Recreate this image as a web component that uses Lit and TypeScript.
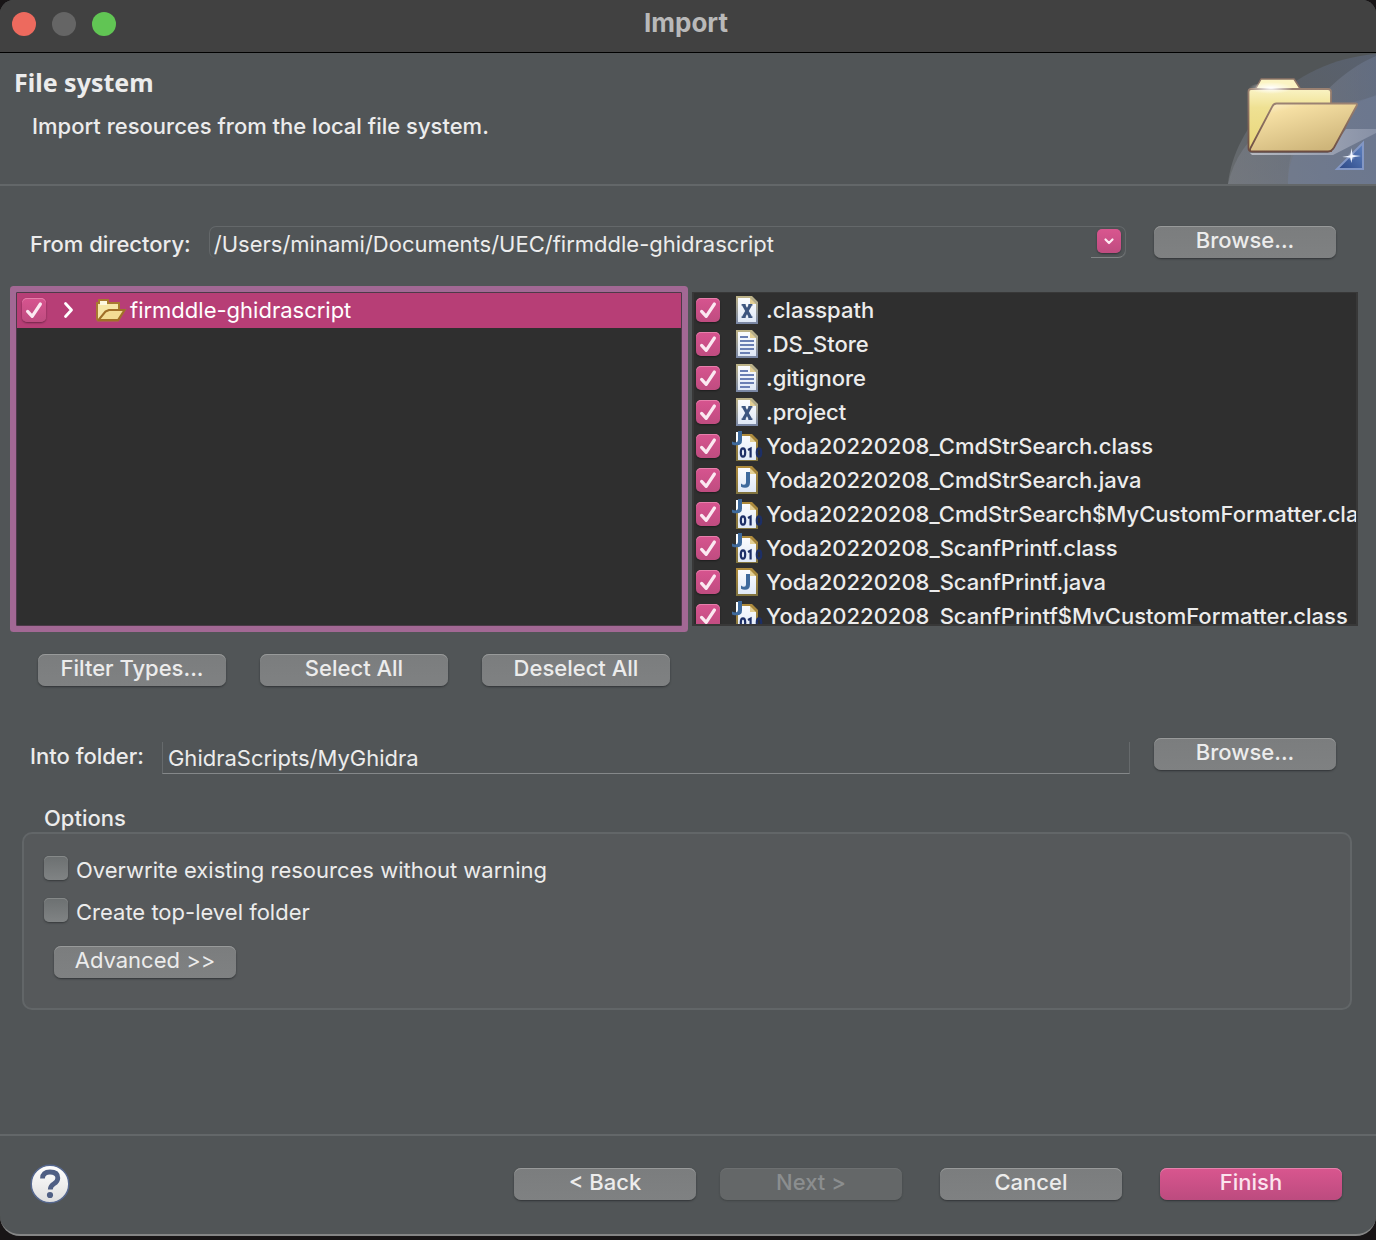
import { LitElement, html, css, svg } from "lit";
import { customElement, property } from "lit/decorators.js";

type FileKind = "xml" | "text" | "java" | "class";

interface Entry {
  name: string;
  kind: FileKind;
}

const FILES: Entry[] = [
  { name: ".classpath", kind: "xml" },
  { name: ".DS_Store", kind: "text" },
  { name: ".gitignore", kind: "text" },
  { name: ".project", kind: "xml" },
  { name: "Yoda20220208_CmdStrSearch.class", kind: "class" },
  { name: "Yoda20220208_CmdStrSearch.java", kind: "java" },
  { name: "Yoda20220208_CmdStrSearch$MyCustomFormatter.class", kind: "class" },
  { name: "Yoda20220208_ScanfPrintf.class", kind: "class" },
  { name: "Yoda20220208_ScanfPrintf.java", kind: "java" },
  { name: "Yoda20220208_ScanfPrintf$MyCustomFormatter.class", kind: "class" },
];

/* Tick box with an optional label and optional content between the two. */
@customElement("tick-box")
export class TickBox extends LitElement {
  @property() label = "";
  @property({ type: Boolean }) checked = false;
  @property({ type: Boolean }) low = false;

  static styles = css`
    :host {
      display: flex;
      min-width: 0;
    }
    .row {
      display: flex;
      align-items: center;
      white-space: nowrap;
    }
    .box {
      display: grid;
      flex: none;
      width: 24px;
      height: 24px;
    }
    .low .box {
      margin-right: 8px;
      margin-bottom: 4px;
    }
    input,
    .mark {
      grid-area: 1 / 1;
      width: 24px;
      height: 24px;
      margin: 0;
    }
    input {
      appearance: none;
      border-radius: 5px;
      background: linear-gradient(#6c7071, #808384);
      box-shadow:
        inset 0 1px 0 #868989,
        0 1px 2px #35383a;
    }
    input:checked {
      background: linear-gradient(#d7548f, #bf4c80);
      box-shadow:
        inset 0 1px 0 #e67fab,
        0 1px 2px #00000066;
    }
    .mark {
      pointer-events: none;
      visibility: hidden;
    }
    input:checked + .mark {
      visibility: visible;
    }
  `;

  render() {
    return html`<label class="row ${this.low ? "low" : ""}">
      <span class="box">
        <input type="checkbox" .checked=${this.checked} />
        <svg class="mark" viewBox="0 0 24 24" aria-hidden="true">
          <path d="M5.6 13.4 10.2 18.4 18.4 6" fill="none" stroke="#fbe9f1" stroke-width="3.2"
            stroke-linecap="round" stroke-linejoin="round" />
        </svg>
      </span>
      <slot></slot>
      <span>${this.label}</span>
    </label>`;
  }
}

/* Small document icons used in the file list. */
@customElement("file-icon")
export class FileIcon extends LitElement {
  @property() kind: FileKind = "text";

  static styles = css`
    :host {
      display: block;
      flex: none;
      width: 32px;
      height: 30px;
    }
    svg {
      display: block;
    }
  `;

  private sheet(edge: string, edgeLow: string, shift: number) {
    return svg`
      <defs>
        <linearGradient id="e" x1="0" y1="0" x2="0" y2="1">
          <stop offset="0" stop-color=${edge} /><stop offset="1" stop-color=${edgeLow} />
        </linearGradient>
        <linearGradient id="p" x1="0" y1="0" x2="0" y2="1">
          <stop offset="0" stop-color="#fbfcfe" /><stop offset="1" stop-color="#dfe8f6" />
        </linearGradient>
      </defs>
      <g transform="translate(0 ${shift})">
        <path d="M4 1H20L26 7V29H4Z" fill="url(#e)" />
        <path d="M6 3H18V9H24V27H6Z" fill="url(#p)" />
        <path d="M18 3L24 9H18Z" fill="#e3cf94" />
      </g>`;
  }

  private mark() {
    switch (this.kind) {
      case "xml":
        return svg`${this.sheet("#bfb487", "#7886a6", 0)}
          <g fill="none" stroke="#3c557f">
            <path d="M11.6 10 18.4 22M18.4 10 11.6 22" stroke-width="3.2" />
            <path d="M9.6 9.8H13.6M16.4 9.8H20.4M9.6 22.2H13.6M16.4 22.2H20.4" stroke-width="1.8" />
          </g>`;
      case "text":
        return svg`${this.sheet("#bfb487", "#7886a6", 0)}
          <path d="M8 8H16M8 12H22M8 16H22M8 20H22M8 24H18" stroke="#6a7fb4" stroke-width="1.8" />`;
      case "java":
        return svg`${this.sheet("#b08c3c", "#80733f", 0)}
          <path d="M14 7H18V17.5Q18 22.8 13 22.8 10.6 22.8 9 21.8V18.6Q10.6 19.8 12 19.8 14 19.8 14 17.5Z"
            fill="#3f6a9c" />`;
      default:
        return svg`${this.sheet("#b08c3c", "#80733f", 2)}
          <path d="M4 1H6V13H4Z" fill="#ffffff" />
          <path d="M6 0H10V9.5Q10 14.3 5 14.3 2 14.3 0 13.4V10.4Q2 11.4 3.6 11.4 6 11.4 6 9Z" fill="#3f6a9c" />
          <g fill="none" stroke="#1d2f66" stroke-width="2.2">
            <ellipse cx="11" cy="21.5" rx="2.2" ry="4.2" />
            <path d="M16 19 18.6 17.6V26.6" />
            <ellipse cx="27" cy="21.5" rx="2.2" ry="4.2" />
          </g>`;
    }
  }

  render() {
    return html`<svg width="32" height="30" viewBox="0 0 32 30" aria-hidden="true">${this.mark()}</svg>`;
  }
}

@customElement("app-root")
export class AppRoot extends LitElement {
  static styles = css`
    :host {
      display: flex;
      flex-direction: column;
      box-sizing: border-box;
      min-height: 100vh;
      padding-bottom: 4px;
      background: #181516;
      color: #ececec;
      font: 500 22px/28px Inter, "Liberation Sans", sans-serif;
    }
    * {
      box-sizing: border-box;
    }
    .window {
      flex: 1;
      display: flex;
      flex-direction: column;
      overflow: hidden;
      border-radius: 14px 14px 20px 20px;
      border-bottom: 2px solid #858686;
      background: #515557;
    }
    .titlebar {
      display: grid;
      grid-template-columns: 1fr auto 1fr;
      align-items: center;
      height: 53px;
      padding: 0 12px 4px;
      border-bottom: 1px solid #000;
      background: #414141;
    }
    .lights {
      display: flex;
      gap: 16px;
    }
    .light {
      width: 24px;
      height: 24px;
      padding: 0;
      border: 0;
      border-radius: 50%;
      background: #656565;
    }
    .close {
      background: #ed6a5e;
    }
    .zoom {
      background: #61c554;
    }
    h1,
    h2,
    p {
      margin: 0;
      font-size: inherit;
    }
    h1 {
      margin-right: 4px;
      padding-bottom: 2px;
      color: #b9b9b9;
      font-size: 26px;
      font-weight: 700;
      line-height: 32px;
    }
    .header {
      display: flex;
      justify-content: space-between;
      height: 133px;
      border-bottom: 2px solid #636769;
    }
    .intro {
      padding: 13px 14px;
    }
    h2 {
      font: 700 25px/32px "Noto Sans", sans-serif;
    }
    .intro p {
      padding: 14px 18px;
    }
    .banner {
      display: block;
      flex: none;
      margin-top: 1px;
    }
    .line {
      display: flex;
      align-items: center;
      padding: 0 40px 0 30px;
    }
    .from {
      margin-top: 40px;
    }
    .into {
      height: 32px;
      margin-top: 52px;
    }
    .line label {
      padding-top: 4px;
      white-space: nowrap;
    }
    button.push {
      flex: none;
      width: 182px;
      height: 32px;
      padding: 0 0 4px;
      border: 0;
      border-radius: 7px;
      background: linear-gradient(#7b7d7e, #7f8182);
      box-shadow:
        inset 0 1px 0 #989a9a,
        0 1px 2px #303335;
      color: #ececec;
      font: inherit;
      line-height: 28px;
    }
    button.push:disabled {
      background: #646768;
      box-shadow:
        inset 0 1px 0 #6d7071,
        0 1px 2px #404445;
      color: #8b8e8f;
    }
    button.primary {
      background: linear-gradient(#d9568f, #bc4b7f);
      box-shadow:
        inset 0 1px 0 #e583ad,
        0 1px 2px #303335;
      color: #fbe4ee;
    }
    .combo {
      flex: 1;
      display: grid;
      grid-template-columns: minmax(0, 1fr) 34px;
      height: 32px;
      margin: 0 28px 0 18px;
      border: 1px solid #64686a;
      border-bottom: 0;
      border-radius: 7px;
    }
    .combo select {
      grid-area: 1 / 1 / 2 / 3;
      appearance: none;
      min-width: 0;
      padding: 2px 34px 0 4px;
      border: 0;
      background: none;
      color: inherit;
      font: inherit;
      font-weight: 400;
      outline: 0;
    }
    .arrow {
      grid-area: 1 / 2;
      padding: 2px 0 0 6px;
      border-bottom: 1px solid #818485;
      border-radius: 0 0 7px 0;
      pointer-events: none;
    }
    .arrow svg {
      display: block;
      border-radius: 5px;
      background: linear-gradient(#d9568f, #bf4c80);
      box-shadow: 0 1px 2px #303335;
    }
    .folder {
      flex: 1;
      min-width: 0;
      height: 32px;
      margin: 8px 24px 0 18px;
      padding: 0 5px;
      border: 1px solid #666a6c;
      border-top: 0;
      border-bottom-color: #85888a;
      background: none;
      color: inherit;
      font: inherit;
      font-weight: 400;
      outline: 0;
    }
    .lists {
      display: grid;
      grid-template-columns: minmax(0, 1fr) minmax(0, 1fr);
      gap: 10px;
      padding: 34px 18px 0 16px;
    }
    .list {
      height: 334px;
      margin: 0;
      padding: 0;
      overflow: hidden;
      border: 2px solid #383838;
      border-top-width: 1px;
      background: #2f2f2f;
      list-style: none;
    }
    .tree {
      border: 1px solid #4d3a49;
      border-radius: 1px;
      box-shadow: 0 0 0 6px #a26894;
      font-weight: 400;
    }
    .item {
      display: flex;
      align-items: center;
      height: 34px;
      padding-left: 2px;
    }
    .selected {
      height: 35px;
      padding: 0 0 1px 5px;
      background: #b73e76;
      color: #fff;
    }
    file-icon {
      margin-left: 12px;
      margin-right: 2px;
    }
    .twist {
      flex: none;
      margin: 0 18px 0 16px;
    }
    .open {
      flex: none;
      margin-right: 4px;
    }
    .actions {
      display: flex;
      gap: 34px;
      padding: 28px 38px 0;
    }
    .actions button.push {
      width: 188px;
    }
    fieldset {
      min-width: 0;
      margin: 34px 24px 0 22px;
      padding: 0;
      border: 0;
    }
    legend {
      padding: 0 22px;
    }
    .group {
      display: flex;
      flex-direction: column;
      align-items: flex-start;
      gap: 14px;
      height: 178px;
      padding: 22px 20px;
      border: 2px solid #626668;
      border-radius: 10px;
      background: #56595b;
      font-weight: 400;
    }
    .group button {
      margin: 6px 0 0 10px;
    }
    .footer {
      display: flex;
      align-items: center;
      height: 100px;
      margin-top: auto;
      padding: 0 34px 2px 30px;
      border-top: 2px solid #636769;
    }
    .help {
      width: 40px;
      height: 40px;
      margin-right: auto;
      padding: 0;
      border: 0;
      background: none;
    }
    .help svg {
      display: block;
    }
    .nav {
      display: flex;
      gap: 24px;
    }
    .finish {
      display: flex;
      gap: 38px;
      margin-left: 38px;
    }
  `;

  private banner() {
    return html`<svg class="banner" width="148" height="130" viewBox="0 0 148 130" aria-hidden="true">
      <defs>
        <linearGradient id="sky" x1="0" y1="1" x2="1" y2="0">
          <stop offset="0" stop-color="#6c7073" />
          <stop offset=".6" stop-color="#5c626a" />
          <stop offset="1" stop-color="#5a6374" />
        </linearGradient>
        <linearGradient id="sky2" x1="0" x2="1">
          <stop offset="0" stop-color="#7b7f87" />
          <stop offset="1" stop-color="#6b7790" />
        </linearGradient>
        <linearGradient id="back" x1="0" y1="0" x2="0" y2="1">
          <stop offset="0" stop-color="#faf3c4" />
          <stop offset=".3" stop-color="#efe193" />
          <stop offset="1" stop-color="#e8d578" />
        </linearGradient>
        <linearGradient id="front" x1="0" y1="0" x2=".6" y2="1">
          <stop offset="0" stop-color="#fff6dc" />
          <stop offset=".25" stop-color="#f5dfa3" />
          <stop offset="1" stop-color="#ceb57a" />
        </linearGradient>
        <linearGradient id="edge" x1="0" y1="0" x2="0" y2="1">
          <stop offset="0" stop-color="#9b8272" />
          <stop offset="1" stop-color="#6d4d42" />
        </linearGradient>
        <linearGradient id="ray" x1="0" x2="1">
          <stop offset="0" stop-color="#c2c5cd" />
          <stop offset="1" stop-color="#8c95aa" />
        </linearGradient>
        <radialGradient id="glow">
          <stop offset="0" stop-color="#ffffff" />
          <stop offset="1" stop-color="#ffffff" stop-opacity="0" />
        </radialGradient>
        <linearGradient id="tri" x1="0" y1="1" x2="1" y2="0">
          <stop offset="0" stop-color="#2b4684" />
          <stop offset="1" stop-color="#5f83c2" />
        </linearGradient>
      </defs>
      <path d="M0 130C6 70 66 6 148 0V130Z" fill="url(#sky)" opacity=".85" />
      <path d="M60 130C58 80 96 24 148 2V130Z" fill="url(#sky2)" opacity=".55" />
      <path d="M0 130C6 104 20 84 42 70L148 42V130Z" fill="url(#sky2)" opacity=".6" />
      <path d="M60 130C60 104 68 70 148 41V130Z" fill="#6f7b93" opacity=".5" />
      <path d="M22 99H100L118 75H148V79L105 101H24Z" fill="url(#ray)" opacity=".85" />
      <path d="M27 36 33 25H66L73 36Z" fill="#fbf4c3" stroke="#8d7467" stroke-width="1.5" stroke-linejoin="round" />
      <path d="M23 35H100Q103 35 103 38V97H23Q20.5 97 20.5 94V38Q20.5 35 23 35Z" fill="url(#back)"
        stroke="url(#edge)" stroke-width="1.8" />
      <path d="M48.5 49.500H127.500Q130 49.500 128.500 52L106 93.500Q103.500 97.500 100 97.500H24Q21 97.500 22.500 94L44 53Q45.500 49.500 48.500 49.500Z"
        fill="url(#front)" stroke="url(#edge)" stroke-width="1.8" stroke-linejoin="round" />
      <ellipse cx="43" cy="34" rx="22" ry="6" fill="url(#glow)" />
      <path d="M135 89V115H109Z" fill="url(#tri)" stroke="#8397c4" stroke-width="2" />
      <path d="M123.5 94 124.5 101 133 102 124.5 103.2 123.3 109 122.2 103.5 114 103 122.3 101.5Z" fill="#eef4ff" />
      <circle cx="123.5" cy="102.5" r="4" fill="url(#glow)" opacity=".6" />
    </svg>`;
  }

  render() {
    return html`<main class="window">
      <header class="titlebar">
        <div class="lights">
          <button class="light close" aria-label="Close"></button>
          <button class="light" aria-label="Minimize" disabled></button>
          <button class="light zoom" aria-label="Zoom"></button>
        </div>
        <h1>Import</h1>
      </header>

      <section class="header">
        <div class="intro">
          <h2>File system</h2>
          <p>Import resources from the local file system.</p>
        </div>
        ${this.banner()}
      </section>

      <div class="line from">
        <label for="from">From directory:</label>
        <div class="combo">
          <select id="from">
            <option>/Users/minami/Documents/UEC/firmddle-ghidrascript</option>
          </select>
          <span class="arrow">
            <svg width="24" height="24" viewBox="0 0 24 24" aria-hidden="true">
              <path d="M8.5 10.5 12 14 15.5 10.5" fill="none" stroke="#fdeaf2" stroke-width="2.2"
                stroke-linecap="round" stroke-linejoin="round" />
            </svg>
          </span>
        </div>
        <button class="push">Browse...</button>
      </div>

      <div class="lists">
        <ul class="list tree">
          <li class="item selected">
            <tick-box label="firmddle-ghidrascript" checked>
              <svg class="twist" width="16" height="20" viewBox="0 0 16 20" aria-hidden="true">
                <path d="M3.5 3.5 9.5 10 3.5 16.5" fill="none" stroke="#fff" stroke-width="2.8"
                  stroke-linecap="round" stroke-linejoin="round" />
              </svg>
              <svg class="open" width="30" height="24" viewBox="0 0 30 24" aria-hidden="true">
                <path d="M1 21V5H3V2H12V5H23V12H28.5L22 22.5H2Z" fill="#f6e6a6" stroke="#a87a30" stroke-width="2" />
                <path d="M4 3H11V7H4Z" fill="#fdf8df" />
                <path d="M2.5 22 9.5 13.5 13 12H28.5L22 22Z" fill="#f3dc94" stroke="#a06f28" stroke-width="2"
                  stroke-linejoin="round" />
              </svg>
            </tick-box>
          </li>
        </ul>
        <ul class="list">
          ${FILES.map(
            (f) => html`<li class="item">
              <tick-box label=${f.name} checked><file-icon kind=${f.kind}></file-icon></tick-box>
            </li>`,
          )}
        </ul>
      </div>

      <div class="actions">
        <button class="push">Filter Types...</button>
        <button class="push">Select All</button>
        <button class="push">Deselect All</button>
      </div>

      <div class="line into">
        <label for="into">Into folder:</label>
        <input id="into" class="folder" type="text" value="GhidraScripts/MyGhidra" />
        <button class="push">Browse...</button>
      </div>

      <fieldset>
        <legend>Options</legend>
        <div class="group">
          <tick-box low label="Overwrite existing resources without warning"></tick-box>
          <tick-box low label="Create top-level folder"></tick-box>
          <button class="push">Advanced &gt;&gt;</button>
        </div>
      </fieldset>

      <footer class="footer">
        <button class="help" aria-label="Help">
          <svg width="40" height="40" viewBox="0 0 40 40" aria-hidden="true">
            <defs>
              <linearGradient id="h" x1="0" y1="0" x2="0" y2="1">
                <stop offset="0" stop-color="#ffffff" />
                <stop offset="1" stop-color="#dedede" />
              </linearGradient>
            </defs>
            <circle cx="20" cy="20" r="18.8" fill="url(#h)" stroke="#56688f" stroke-width="1.5" />
            <path d="M12.5 14.5Q12.5 8 20 8 27.8 8 27.8 14 27.8 17.5 24 19.8 20.3 22 20.3 25.5" fill="none"
              stroke="#4f5f84" stroke-width="4.8" />
            <circle cx="20" cy="31" r="3.1" fill="#4f5f84" />
          </svg>
        </button>
        <div class="nav">
          <button class="push">&lt; Back</button>
          <button class="push" disabled>Next &gt;</button>
        </div>
        <div class="finish">
          <button class="push">Cancel</button>
          <button class="push primary">Finish</button>
        </div>
      </footer>
    </main>`;
  }
}
